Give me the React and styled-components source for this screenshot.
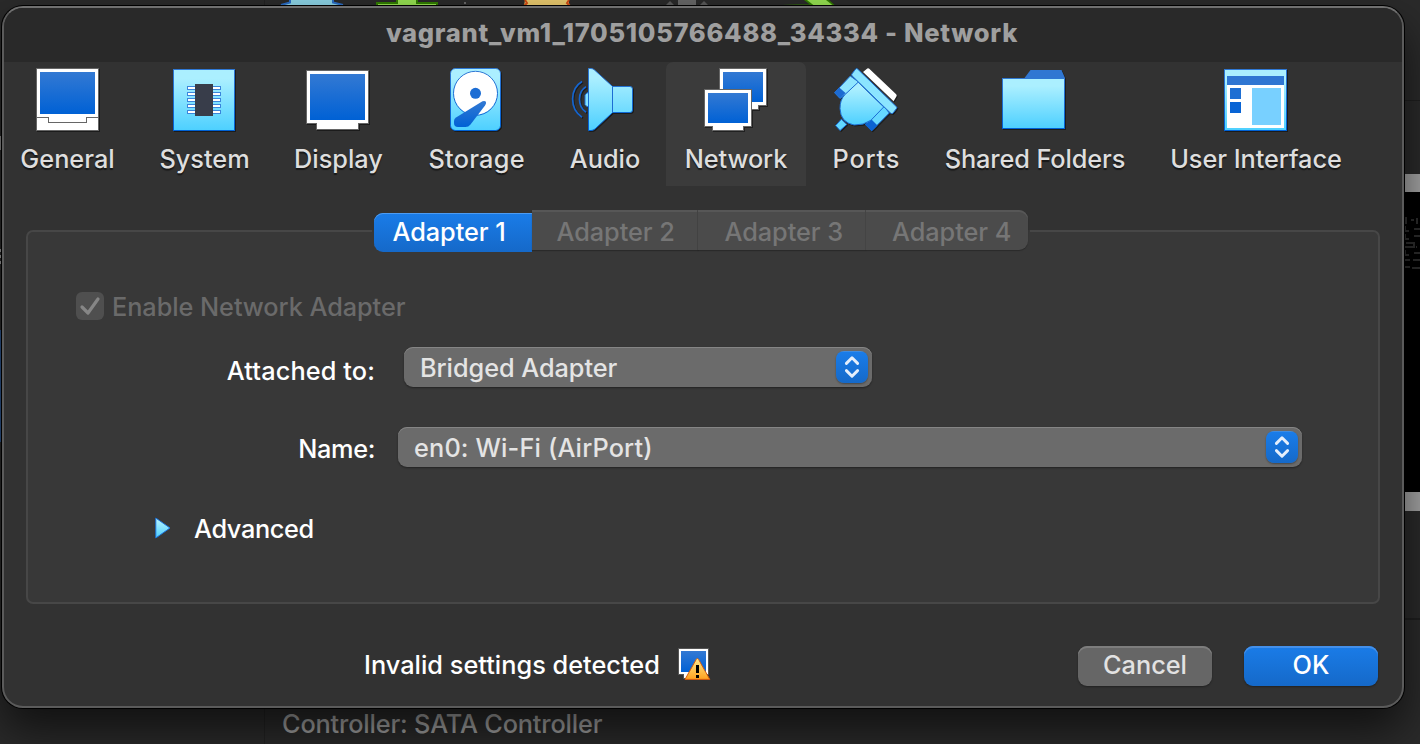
import React from "react";
import styled, { createGlobalStyle, css } from "styled-components";

const Global = createGlobalStyle`
  * { box-sizing: border-box; }
  body { margin: 0; background: #2a2a2a; font-family: Inter, "Liberation Sans", sans-serif; font-weight: 450; }
`;

/* ---------- desktop behind the dialog ---------- */

const Desktop = styled.div`
  position: relative;
  width: 1420px;
  height: 744px;
  overflow: hidden;
  background: #2a2a2a;
  display: grid;
  grid-template-columns: 265px 1fr;
`;

const MachineList = styled.div`
  border-right: 1px solid #222;
  display: flex;
  flex-direction: column;
`;

const ListSliver = styled.div`
  width: 2px;
  height: ${(p) => p.$height}px;
  margin-top: ${(p) => p.$top}px;
  background: ${(p) => p.$fill};
`;

const Details = styled.div`
  display: flex;
  flex-direction: column;
`;

const ManagerBar = styled.div`
  height: 101px;
  border-bottom: 1px solid #1f1f1f;
`;

const PreviewArea = styled.div`
  height: 519px;
  border-bottom: 2px solid #1f1f1f;
  padding-top: 73px;
  display: flex;
  justify-content: flex-end;
`;

const Preview = styled.div`
  width: 15px;
  height: 337px;
  background: #000;
  border: solid #a4a4a4;
  border-width: 18px 0 19px;
`;

const StorageLine = styled.div`
  padding: 86px 0 0 17px;
  font-size: 25.3px;
  line-height: 36px;
  letter-spacing: -0.16px;
  color: #a0a0a0;
  white-space: nowrap;
`;

/* ---------- dialog ---------- */

const Dialog = styled.div`
  position: absolute;
  left: 2px;
  top: 6px;
  width: 1402px;
  height: 702px;
  border: 2px solid #5b5b5b;
  border-top-color: #707070;
  border-radius: 21px;
  background: #323232;
  box-shadow: 0 0 0 1px #000, 0 22px 44px rgba(0, 0, 0, 0.6);
  overflow: hidden;
  display: flex;
  flex-direction: column;
`;

const TitleBar = styled.div`
  height: 54px;
  flex: none;
  padding-right: 2px;
  background: #292929;
  color: #9f9f9f;
  font-size: 25.6px;
  font-weight: 800;
  line-height: 50px;
  text-align: center;
  white-space: nowrap;
  letter-spacing: ${(p) => p.$track}px;
`;

const Categories = styled.div`
  display: flex;
  gap: 8px;
  height: 124px;
  flex: none;
  margin-left: -2px;
`;

const Category = styled.div`
  width: ${(p) => p.$width}px;
  flex: none;
  display: flex;
  flex-direction: column;
  align-items: center;
  padding-top: 6px;
  border-radius: 7px 7px 0 0;
  background: ${(p) => (p.$active ? "#3b3b3b" : "transparent")};
`;

const CategoryIcon = styled.svg`
  display: block;
  height: 64px;
  width: ${(p) => p.$w}px;
  flex: none;
  overflow: visible;
  filter: drop-shadow(1px 1px 0.5px rgba(0, 0, 0, 0.45));
`;

const CategoryLabel = styled.div`
  margin-top: 9px;
  font-size: 25.3px;
  line-height: 36px;
  color: #dedede;
  white-space: nowrap;
  text-shadow: 0 2px 1px rgba(0, 0, 0, 0.55);
  letter-spacing: ${(p) => p.$track}px;
  margin-right: ${(p) => -p.$track}px;
`;

const Panel = styled.div`
  margin: 44px 22px 0;
  height: 374px;
  flex: none;
  border: 2px solid #474747;
  border-radius: 7px;
  background: #383838;
  display: flex;
  flex-direction: column;
`;

const Segments = styled.div`
  display: flex;
  width: 658px;
  height: 44px;
  flex: none;
  margin: -22px 0 0 344px;
  padding: 0 2px;
  background: linear-gradient(#323232 20px, #383838 20px);
`;

const Segment = styled.div`
  width: ${(p) => p.$width}px;
  height: 40px;
  padding-left: ${(p) => p.$inset}px;
  background: #4b4b4b;
  box-shadow: inset 0 2px 0 #575757, 0 1px 1px rgba(0, 0, 0, 0.25);
  border-right: 1px solid #464646;
  color: #767676;
  font-size: 25.3px;
  line-height: 43px;
  white-space: nowrap;
  letter-spacing: -0.05px;
  &:last-child { border-right: 0; border-radius: 0 9px 9px 0; }
  ${(p) =>
    p.$active &&
    css`
      margin-top: 3px;
      height: 39px;
      line-height: 37px;
      border: 0;
      border-radius: 9px 0 0 9px;
      color: #fff;
      background: linear-gradient(#1a7ce8, #1569c9);
      box-shadow: inset 0 1px 0 #4d9cf2;
    `}
`;

const EnableRow = styled.div`
  display: flex;
  align-items: center;
  gap: 8px;
  height: 36px;
  margin: 34px 0 0 48px;
`;

const CheckBox = styled.svg`
  width: 28px;
  height: 28px;
  display: block;
`;

const Text = styled.span`
  font-size: 25.3px;
  line-height: 36px;
  white-space: nowrap;
  color: ${(p) => p.$color || "#fff"};
  letter-spacing: ${(p) => p.$track || 0}px;
  padding-top: ${(p) => p.$drop || 0}px;
`;

const Field = styled.div`
  display: flex;
  height: 40px;
  margin-top: ${(p) => p.$top}px;
`;

const FieldLabel = styled.div`
  width: 347px;
  margin-right: ${(p) => p.$gap}px;
  padding-top: ${(p) => p.$drop}px;
  text-align: right;
`;

const Select = styled.div`
  width: ${(p) => p.$width}px;
  height: 40px;
  border-radius: 9px;
  background: #6b6b6b;
  box-shadow: inset 0 1px 0 #858585, 0 1px 2px rgba(0, 0, 0, 0.4);
  display: flex;
  align-items: center;
  justify-content: space-between;
  padding: 0 4px 0 16px;
`;

const Stepper = styled.svg`
  width: 32px;
  height: 32px;
  border-radius: 8px;
  background: linear-gradient(#4d93e0 0, #1a7ce8 1.5px, #1569c9);
  box-shadow: 0 1px 2px rgba(0, 0, 0, 0.35);
`;

const Disclosure = styled.div`
  display: flex;
  align-items: center;
  gap: 23px;
  height: 36px;
  margin: 43px 0 0 127px;
`;

const Footer = styled.div`
  display: flex;
  align-items: center;
  height: 40px;
  margin-top: 42px;
  padding-left: 360px;
`;

const WarningIcon = styled.svg`
  display: block;
  width: 33px;
  height: 34px;
  flex: none;
  margin-bottom: 4px;
`;

const Status = styled.div`
  width: 314px;
  flex: none;
  padding-bottom: 2px;
`;

const Button = styled.div`
  width: 134px;
  height: 40px;
  margin-left: ${(p) => p.$left}px;
  border-radius: 9px;
  font-size: 25.3px;
  line-height: 38px;
  text-align: center;
  color: ${(p) => (p.$primary ? "#fff" : "#e2e2e2")};
  background: ${(p) => (p.$primary ? "linear-gradient(#1a7ce8, #1569c9)" : "#666")};
  box-shadow: inset 0 2px 0 ${(p) => (p.$primary ? "#4490ea" : "#7d7d7d")}, 0 1px 2px rgba(0, 0, 0, 0.35);
`;

/* ---------- drawings ---------- */

const Gradients = () => (
  <svg width="0" height="0" style={{ position: "absolute" }}>
    <defs>
      <linearGradient id="deep" x1="0" y1="0" x2="0" y2="1">
        <stop offset="0" stopColor="#3379d3" />
        <stop offset="1" stopColor="#0061d5" />
      </linearGradient>
      <linearGradient id="sky" x1="0" y1="0" x2="0" y2="1">
        <stop offset="0.15" stopColor="#abefff" />
        <stop offset="1" stopColor="#4dd0ff" />
      </linearGradient>
      <linearGradient id="edge" x1="0" y1="0" x2="0" y2="1">
        <stop offset="0" stopColor="#2f78d4" />
        <stop offset="1" stopColor="#0061d5" />
      </linearGradient>
      <linearGradient id="amber" x1="0" y1="0" x2="0" y2="1">
        <stop offset="0" stopColor="#ffe98a" />
        <stop offset="1" stopColor="#ffa21f" />
      </linearGradient>
    </defs>
  </svg>
);

const GeneralIcon = () => (
  <g shapeRendering="crispEdges">
    <rect x="0.5" y="0.5" width="62" height="62" fill="#fff" stroke="#666" />
    <rect x="4" y="4" width="55" height="42" fill="url(#deep)" />
    <path d="M0 49.5H12.5V54.5H50.5V49.5H63" fill="none" stroke="#666" />
  </g>
);

const SystemIcon = () => (
  <g shapeRendering="crispEdges">
    <rect x="0.5" y="1.5" width="61" height="61" fill="url(#sky)" stroke="url(#edge)" />
    {[18, 24, 30, 36, 42].map((y) => (
      <rect key={y} x="14.5" y={y + 0.5} width="33" height="3" fill="#fff" stroke="#3a86dc" />
    ))}
    <rect x="22" y="16" width="18" height="32" fill="#383d4a" />
  </g>
);

const DisplayIcon = () => (
  <g shapeRendering="crispEdges" transform="translate(-1 0)">
    <path d="M0.5 2.5H62.5V55.5H52.5V61.5H10.5V55.5H0.5Z" fill="#fff" stroke="#666" />
    <rect x="4" y="6" width="55" height="46" fill="url(#deep)" />
  </g>
);

const StorageIcon = () => (
  <g>
    <rect x="5.5" y="0.5" width="50" height="62" rx="5" fill="url(#sky)" stroke="url(#edge)" />
    <circle cx="30.5" cy="25.3" r="22" fill="#fff" stroke="url(#edge)" />
    <circle cx="30.5" cy="25.3" r="5.5" fill="#1c6dd4" />
    <path d="M11 49.5L37.5 33.3Q40 32.3 41 34Q41.4 35.5 40 37.5L25.5 56.5Q23.5 59 20.5 59H13Q9 59 9 55V53Q9 50.8 11 49.5Z" fill="url(#deep)" />
  </g>
);

const AudioIcon = () => (
  <g stroke="url(#edge)">
    <path d="M15.5 24.8H14L12 27V36.5L14 38.7H15.5Z" fill="#85e2ff" stroke="#1c6dd4" />
    <path d="M15.5 0.5H18Q20 0.5 21.5 2L39.6 18.5H57Q59.5 18.5 59.5 21V42Q59.5 44.5 57 44.5H39.6L22 61Q20 62.5 18 62.5H15.5Z" fill="url(#sky)" />
    <path d="M39.5 18.5V44.5" fill="none" stroke="#1c6dd4" />
    <path d="M9 13.5C-3.5 21 -3.5 41 9 49.3M13 18.8C4.3 24 4.3 38 13 44.3" fill="none" stroke="#1565cf" strokeWidth="1.7" />
  </g>
);

const NetworkIcon = () => (
  <g shapeRendering="crispEdges">
    <path d="M15.5 0.5H62.5V37.5H54.5V41.5H23.5V37.5H15.5Z" fill="#fff" stroke="#666" />
    <rect x="19" y="4" width="40" height="30" fill="url(#deep)" />
    <path d="M0.5 21.5H47.5V58.5H39.5V62.5H8.5V58.5H0.5Z" fill="#fff" stroke="#666" />
    <rect x="4" y="25" width="40" height="30" fill="url(#deep)" />
  </g>
);

const PortsIcon = () => (
  <g strokeLinejoin="round">
    <path d="M29 4L33.3 0.6Q34.3 0 35.3 0.8L62.2 26.2Q63.2 27.3 62.4 28.6L59.6 33.2Z" fill="#fff" />
    <path d="M16.3 8L0.6 24.7L6 30.4L26 15Z" fill="#8fe6ff" stroke="#2474d6" />
    <path d="M5.2 19.5L0.4 24.7L6 30.6L11.5 25Z" fill="#1d6bd2" />
    <path d="M48 36L55.3 45L37.7 62.7L31.5 56.6Z" fill="#66d8ff" stroke="#1c6dd4" />
    <path d="M37.5 51.5L43.5 57.5L37.7 63.2L31 56.6Z" fill="#0b63d2" />
    <path d="M7.4 51.2L12.8 56.4L6 62.6L1.6 57.6Z" fill="#62d8ff" stroke="#1c6dd4" />
    <path d="M24.2 14.2L49.7 39L37 52.2Q29.5 57.5 20 57Q6.5 54.5 6 40.5Q6 32 10.5 27Z" fill="url(#sky)" stroke="#1c6dd4" />
    <path d="M17.8 6L21.8 0.9Q22.7 0.2 23.6 1L62.5 38.8Q63.2 39.5 62.6 40.4L58.9 45.3Q57.4 45.9 56.2 44.8L18 7.8Q17.3 7 17.8 6Z" fill="#8be5ff" stroke="#1c6dd4" />
  </g>
);

const FolderIcon = () => (
  <g>
    <path d="M21.5 10L27.5 2H58.5L62 10Z" fill="#3077d2" />
    <rect x="-0.5" y="10.5" width="62" height="50" fill="url(#sky)" stroke="url(#edge)" />
  </g>
);

const InterfaceIcon = () => (
  <g shapeRendering="crispEdges">
    <rect x="0.5" y="1.5" width="62" height="61" fill="url(#sky)" stroke="url(#edge)" />
    <rect x="3" y="8" width="57" height="9" fill="#2f76d2" />
    <rect x="3" y="17" width="57" height="43" fill="#fff" />
    <rect x="6" y="20" width="11" height="11" fill="#1e6fd3" />
    <rect x="6" y="34" width="11" height="11" fill="#0864d5" />
    <rect x="28" y="20" width="29" height="37" fill="#78d0ff" />
  </g>
);

const ManagerIcons = () => (
  <svg width="600" height="6" viewBox="265 0 600 6" style={{ display: "block" }}>
    <path d="M281 5.5L290 2V0H333V2L343 5.5Z" fill="#8ad0e3" />
    <path d="M281 5L290 2.5V0M343 5L333 2.5V0" stroke="#2a6cc4" strokeWidth="2" fill="none" />
    <rect x="376" y="2" width="62" height="4" fill="#317d00" />
    <rect x="396" y="0" width="22" height="6" fill="#317d00" />
    <path d="M398 0H416V4H436V6H378V4H398Z" fill="#93dd50" />
    <rect x="464" y="2" width="2" height="2" fill="#666" />
    <path d="M525 0H568L570 6H524Z" fill="#e5c66c" />
    <path d="M525 0L527 3L524 6M569 0L567 3L570 6" stroke="#d04a12" strokeWidth="2" fill="none" />
    <path d="M666 5L670 1L674 5ZM700 5L704 1L708 5Z" fill="#585858" />
    <rect x="678" y="0" width="18" height="6" fill="#666" />
    <path d="M782 4.5H810L804 0H829L835 5.5H812" fill="#317d00" />
    <path d="M807 0H826L833 5.5H814Z" fill="#93dd50" />
  </svg>
);

const ConsoleSpecks = () => (
  <svg width="15" height="80" viewBox="0 0 15 80" shapeRendering="crispEdges">
    <path d="M1 25V32M6 28H9M12 26V32M0 34V39H4M9 37H15M0 42V47H4M9 44H15M1 51H9V55H0M11 55H12M0 58V63H4M9 61H15M0 68H5M8 68H15M0 75H5M7 76H15" fill="none" stroke="#2c2c2c" strokeWidth="2.4" />
  </svg>
);

const Chevrons = () => (
  <Stepper viewBox="0 0 32 32">
    <path d="M10.4 12.4L16 6.8L21.6 12.4M10.4 19.6L16 25.2L21.6 19.6" fill="none" stroke="#e4eefb" strokeWidth="2.9" strokeLinecap="round" strokeLinejoin="round" />
  </Stepper>
);

const categories = [
  { label: "General", width: 131, track: 0, icon: GeneralIcon },
  { label: "System", width: 127, track: 0, icon: SystemIcon },
  { label: "Display", width: 125, track: 0, icon: DisplayIcon },
  { label: "Storage", width: 135, track: 0.25, icon: StorageIcon },
  { label: "Audio", width: 106, track: 0, icon: AudioIcon },
  { label: "Network", width: 140, track: -0.08, icon: NetworkIcon, active: true },
  { label: "Ports", width: 104, track: 0.8, icon: PortsIcon },
  { label: "Shared Folders", width: 218, track: -0.1, icon: FolderIcon },
  { label: "User Interface", width: 208, track: -0.05, icon: InterfaceIcon },
];

const adapters = [
  { label: "Adapter 1", width: 158, inset: 18.5, active: true },
  { label: "Adapter 2", width: 166, inset: 24.5 },
  { label: "Adapter 3", width: 168, inset: 26.5 },
  { label: "Adapter 4", width: 162, inset: 26 },
];

export default function App() {
  return (
    <Desktop>
      <Global />
      <Gradients />
      <MachineList>
        <ListSliver $top={136} $height={14} $fill="#8a8a8a" />
        <ListSliver $top={99} $height={3} $fill="#9a9a9a" />
        <ListSliver $top={3} $height={3} $fill="#9a9a9a" />
        <ListSliver $top={3} $height={3} $fill="#9a9a9a" />
        <ListSliver $top={66} $height={112} $fill="#2c5389" />
      </MachineList>
      <Details>
        <ManagerBar>
          <ManagerIcons />
        </ManagerBar>
        <PreviewArea>
          <Preview>
            <ConsoleSpecks />
          </Preview>
        </PreviewArea>
        <StorageLine>Controller: SATA Controller</StorageLine>
      </Details>

      <Dialog>
        <TitleBar $track={0.68}>vagrant_vm1_1705105766488_34334 - Network</TitleBar>
        <Categories>
          {categories.map(({ label, width, track, icon: Icon, active }) => {
            const w = width % 2 ? 63 : 64;
            return (
              <Category key={label} $width={width} $active={active}>
                <CategoryIcon $w={w} viewBox={`0 0 ${w} 64`}>
                  <Icon />
                </CategoryIcon>
                <CategoryLabel $track={track}>{label}</CategoryLabel>
              </Category>
            );
          })}
        </Categories>
        <Panel>
          <Segments>
            {adapters.map((a) => (
              <Segment key={a.label} $width={a.width} $active={a.active} $inset={a.inset}>
                {a.label}
              </Segment>
            ))}
          </Segments>
          <EnableRow>
            <CheckBox viewBox="0 0 28 28">
              <rect width="28" height="28" rx="6" fill="#4f4f4f" />
              <path d="M6 15L12 21L22 7" fill="none" stroke="#868686" strokeWidth="3.2" strokeLinecap="round" strokeLinejoin="round" />
            </CheckBox>
            <Text $color="#6a6a6a" $drop={1} $track={-0.06}>Enable Network Adapter</Text>
          </EnableRow>
          <Field $top={23}>
            <FieldLabel $gap={29} $drop={6}>
              <Text $track={0.12}>Attached to:</Text>
            </FieldLabel>
            <Select $width={468}>
              <Text $color="#e4e4e4" $drop={2} $track={-0.05}>Bridged Adapter</Text>
              <Chevrons />
            </Select>
          </Field>
          <Field $top={40}>
            <FieldLabel $gap={23} $drop={4}>
              <Text $track={-0.35}>Name:</Text>
            </FieldLabel>
            <Select $width={904}>
              <Text $color="#e4e4e4" $drop={2} $track={0.15}>en0: Wi-Fi (AirPort)</Text>
              <Chevrons />
            </Select>
          </Field>
          <Disclosure>
            <svg width="16" height="22" viewBox="0 0 16 22">
              <path d="M0.8 1L15 11L0.8 21Z" fill="url(#sky)" stroke="#1c74dc" />
            </svg>
            <Text $drop={2} $track={-0.35}>Advanced</Text>
          </Disclosure>
        </Panel>
        <Footer>
          <Status>
            <Text $track={0.02}>Invalid settings detected</Text>
          </Status>
          <WarningIcon viewBox="0 0 33 34">
            <path d="M0.5 1.5H30.5V27.5H26V31H5.5V27.5H0.5Z" fill="#fff" stroke="#555" shapeRendering="crispEdges" />
            <rect x="3" y="4" width="25" height="21" fill="url(#deep)" />
            <path d="M19.3 11.5Q20 11.5 20.5 12.3L31.8 32.4H7L18.3 12.3Q18.8 11.5 19.3 11.5Z" fill="url(#amber)" stroke="#d85b0c" />
            <path d="M18 18H21V26H18ZM18 28H21V31H18Z" fill="#000" />
          </WarningIcon>
          <Button $left={367}>Cancel</Button>
          <Button $left={32} $primary>OK</Button>
        </Footer>
      </Dialog>
    </Desktop>
  );
}
